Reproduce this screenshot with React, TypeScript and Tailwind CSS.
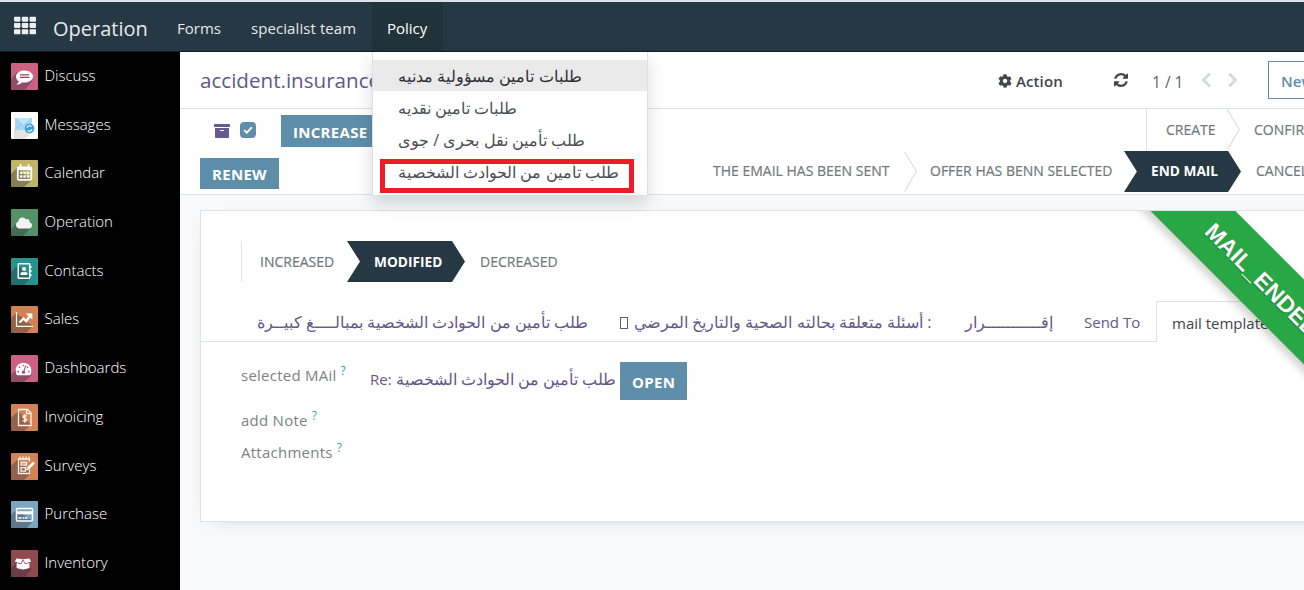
import type { ReactNode } from "react";
import { FaArchive, FaBoxOpen, FaCloud, FaCog, FaRegAddressBook, FaTachometerAlt, FaTh } from "react-icons/fa";

const RefreshIcon = () => (
  <svg viewBox="0 0 1536 1536" className="size-[14px] fill-[#40464c]">
    <path d="M1511 928q0 5-1 7-64 268-268 434.5t-478 166.5q-146 0-282.5-55t-243.5-157l-129 129q-19 19-45 19t-45-19-19-45v-448q0-26 19-45t45-19h448q26 0 45 19t19 45-19 45l-137 137q71 66 161 102t187 36q134 0 250-65t186-179q11-17 53-117 8-23 30-23h192q13 0 22.5 9.5t9.5 22.5zm25-800v448q0 26-19 45t-45 19h-448q-26 0-45-19t-19-45 19-45l138-138q-148-137-349-137-134 0-250 65t-186 179q-11 17-53 117-8 23-30 23h-199q-13 0-22.5-9.5t-9.5-22.5v-7q65-268 270-434.5t480-166.5q146 0 284 55.5t245 156.5l130-129q19-19 45-19t45 19 19 45z" />
  </svg>
);

const PagerArrow = ({ flip }: { flip?: boolean }) => (
  <svg viewBox="0 0 11 16" className={`h-[16px] w-[11px] fill-none stroke-[#d5d8de] stroke-[2.8] ${flip ? "-scale-x-100" : ""}`}>
    <path d="M9 1.500 2.500 8 9 14.500" />
  </svg>
);

type App = { name: string; tile: string; shadow?: string; icon: ReactNode };

const line = { fill: "none", stroke: "#f4f1ee", strokeWidth: 1.3 };

const apps: App[] = [
  {
    name: "Discuss",
    tile: "bg-[#cc6184]",
    shadow: "M6 9 0 16V27H14L22 17Z",
    icon: (
      <g>
        <path d="M13.5 7.500c-4.800 0-8.500 2.700-8.500 6 0 2 1 3.500 2.700 4.700 0 1.300-.9 2.200-2.400 3.200 2.400.2 4.400-.6 5.800-2 .8.100 1.600.2 2.400.2 4.800 0 8.500-2.700 8.500-6s-3.700-6.100-8.500-6.100Z" fill="#fff" />
        <path d="M9 11.800h9M9 14.400h9.500" stroke="#8c4b62" strokeWidth="1.2" />
      </g>
    ),
  },
  {
    name: "Messages",
    tile: "bg-[#fbfbfb]",
    icon: (
      <g>
        <path d="M3 17V27H14L22 19Z" fill="#e2e2e2" />
        <rect x="4" y="6" width="17" height="12" fill="#a5d8f3" />
        <path d="M4 6l8.500 7.500L21 6Z" fill="#bfe5f8" />
        <path d="M4 18l6-6.500M21 18l-6-6.500M4 6l8.500 7.500L21 6" stroke="#86c3e4" strokeWidth=".8" fill="none" />
        <circle cx="18.500" cy="16.500" r="4.800" fill="#3c9fd8" />
        <path d="M16 16a2.600 2.600 0 0 1 4.500-1.400M21 17a2.600 2.600 0 0 1-4.500 1.400" stroke="#e6f5fd" strokeWidth="1.2" fill="none" />
      </g>
    ),
  },
  {
    name: "Calendar",
    tile: "bg-[#c0b467]",
    shadow: "M6 8 0 14V27H13L21 20Z",
    icon: (
      <g>
        <rect x="6.8" y="7.3" width="13.500" height="12.500" rx="1" fill="none" stroke="#fff" strokeWidth="1.8" />
        <path d="M6 8.500h15" stroke="#fff" strokeWidth="3" />
        <path d="M9.500 4v4M17.500 4v4" stroke="#fff" strokeWidth="1.6" />
        <path d="M9 12.800h2.400m1 0h2.400m1 0h2.400M9 16.500h2.400m1 0h2.400m1 0h2.400" stroke="#fff" strokeWidth="2.3" />
      </g>
    ),
  },
  {
    name: "Operation",
    tile: "bg-[#549169]",
    shadow: "M6 14 0 20V27H12L21 18Z",
    icon: <FaCloud x="5" y="6" width="17" height="15" color="#f4f4f4" />,
  },
  {
    name: "Contacts",
    tile: "bg-[#259390]",
    shadow: "M7 7 0 14V27H13L20 20Z",
    icon: <FaRegAddressBook x="5.500" y="5" width="17" height="16.500" color="#fff" />,
  },
  {
    name: "Sales",
    tile: "bg-[#d38353]",
    shadow: "M5 7 0 12V27H15L22 20Z",
    icon: (
      <g>
        <path d="M5.500 6v14.300H22" fill="none" stroke="#fff" strokeWidth="1.2" />
        <path d="M8.500 16.500l4-4 2.700 2.700L19 10" fill="none" stroke="#fff" strokeWidth="2.2" />
        <path d="M14.800 7.500h6.500v6Z" fill="#fff" />
      </g>
    ),
  },
  {
    name: "Dashboards",
    tile: "bg-[#cc6184]",
    shadow: "M6 13 0 20V27H13L21 20Z",
    icon: <FaTachometerAlt x="4.500" y="6" width="18" height="16.500" color="#fff" />,
  },
  {
    name: "Invoicing",
    tile: "bg-[#d38353]",
    shadow: "M7 7 0 14V27H13L20 21Z",
    icon: (
      <g>
        <path d="M7.500 5.500h9l3.500 3.500v12.500H7.500Z" {...line} />
        <path d="M15.500 5.500v4H20" {...line} />
        <path d="M15.600 12.300c-.6-.7-3.600-1-3.700.6 0 1.900 3.800 1 3.800 2.900 0 1.700-3.300 1.500-4 .5M13.700 10.200v8.600" {...line} />
      </g>
    ),
  },
  {
    name: "Surveys",
    tile: "bg-[#d38353]",
    shadow: "M7 6 0 13V27H13L20 20Z",
    icon: (
      <g>
        <path d="M18.500 8.500V6H7.500v14.500h11v-4" {...line} />
        <path d="M9 3.500v3M12 3.500v3M15 3.500v3M18 3.500v3" {...line} />
        <path d="M10 9.500h5.500v2.600H10ZM10 14.700h4.500v3.500H10Z" {...line} />
        <path d="M23 9.500l-6 6" stroke="#fff" strokeWidth="2.6" />
        <path d="M15.200 17.300l.6-2.600 2 2Z" fill="#fff" />
      </g>
    ),
  },
  {
    name: "Purchase",
    tile: "bg-[#7ba6bf]",
    shadow: "M5 9 0 14V27H16L22 20Z",
    icon: (
      <g>
        <rect x="5.500" y="7.500" width="16" height="12.500" rx="1" fill="none" stroke="#fff" strokeWidth="1.500" />
        <path d="M5 11.800h17" stroke="#fff" strokeWidth="3" />
        <path d="M7.500 17h3m1 0h1.500m.6 0h3" stroke="#fff" strokeWidth="1.6" />
      </g>
    ),
  },
  {
    name: "Inventory",
    tile: "bg-[#8f4a4e]",
    shadow: "M6 12 0 18V27H14L21 19Z",
    icon: <FaBoxOpen x="4" y="6" width="19" height="16" color="#fff" />,
  },
];

const Sidebar = () => (
  <aside className="flex w-[180px] shrink-0 flex-col bg-black pt-[11px] pl-[11px]">
    {apps.map((a) => (
      <a key={a.name} className="flex h-[48.7px] shrink-0 items-start gap-[6.5px]">
        <span className={`block size-[27px] shrink-0 overflow-hidden rounded-[1px] ${a.tile}`}>
          <svg viewBox="0 0 27 27" className="block size-[27px]">
            {a.shadow && <path d={a.shadow} fill="#2d2d3a" opacity=".38" />}
            {a.icon}
          </svg>
        </span>
        <span className="text-[15px] leading-[25px] font-light whitespace-nowrap text-white">{a.name}</span>
      </a>
    ))}
  </aside>
);

const menuItems = [
  "طلبات تامين مسؤولية مدنيه",
  "طلبات تامين نقديه",
  "طلب تأمين نقل بحرى / جوى",
  "طلب تأمين من الحوادث الشخصية",
];

const PolicyMenu = () => (
  <div className="absolute top-[50px] left-0 z-20 h-[144px] w-[276px] border border-t-0 border-[#dcdfe4] bg-white pt-[8px] shadow-[0_8px_16px_rgba(0,0,0,0.15)]">
    {menuItems.map((m, i) => (
      <div
        key={m}
        className={`mb-[1px] h-[31px] pl-[25px] text-left text-[16.2px] leading-[33px] whitespace-nowrap ${i === 0 ? "bg-[#eaeaea] text-[#2c3036]" : "text-[#4a5057]"}`}
      >
        {m}
      </div>
    ))}
    <div className="absolute top-[107px] left-[7px] h-[34px] w-[254px] border-[5px] border-[#ee1c25]" />
  </div>
);

const Navbar = () => (
  <nav className="flex h-[52px] border-t-2 border-b border-t-[#dfe3e8] border-b-[#131e26] bg-[#263843] text-[15px] text-[#e6e9eb]">
    <div className="flex w-[53px] items-start pt-[14px] pl-[14px]">
      <FaTh className="h-[19px] w-[22px] text-[#eceeef]" preserveAspectRatio="none" viewBox="0 16 512 480" />
    </div>
    <div className="w-[109px] pt-[13px] text-[20px] leading-[28px]">Operation</div>
    <div className="flex">
      <a className="w-[74px] pt-[13px] pl-[15px] leading-[26px]">Forms</a>
      <a className="w-[136px] pt-[13px] pl-[15px] leading-[26px] tracking-[0.08px] whitespace-nowrap">specialist team</a>
      <div className="relative w-[71px] bg-[#22323b]">
        <a className="block pt-[13px] pl-[15px] leading-[26px] text-white">Policy</a>
        <PolicyMenu />
      </div>
    </div>
  </nav>
);

type StageProps = { children: string; width: string; active?: boolean; last?: boolean; gap?: string; textPad?: string };

const Stage = ({ children, width, active, last, gap = "pl-[19px]", textPad = "" }: StageProps) => (
  <div className={`relative flex h-[41px] shrink-0 items-center whitespace-nowrap ${width} ${gap} ${active ? "font-bold text-white" : "text-[#72787e]"}`}>
    {active && (
      <svg viewBox="0 0 118 41" preserveAspectRatio="none" className="absolute inset-0 h-full w-full fill-[#263843]">
        <path d="M0 0H105L118 20.500 105 41H0L13 20.500Z" />
      </svg>
    )}
    {!active && !last && (
      <svg viewBox="0 0 13 41" className="absolute top-0 right-0 h-[41px] w-[13px] fill-none stroke-[#dee2e6] stroke-[1.4]">
        <path d="M.5 .5 12.300 20.500 .5 40.500" />
      </svg>
    )}
    <span className={`${textPad} ${active ? "relative text-[13.7px]" : "text-[14px] [-webkit-text-stroke:0.2px]"}`}>{children}</span>
  </div>
);

const primary = "bg-[#5f8eaa] text-[15px] font-bold tracking-[0.3px] text-white";

const StatusBar = () => (
  <div className="flex h-[86px] shrink-0 justify-between border-b border-[#dee2e6] bg-white">
    <div className="flex flex-col pl-[20px]">
      <div className="flex h-[44px] items-start pl-[14px]">
        <FaArchive className="mt-[14px] size-[16px] text-[#675a91]" />
        <span className="mt-[13px] ml-[10px] flex size-[16px] items-center justify-center rounded-[4px] bg-[#5f8eaa]">
          <svg viewBox="0 0 10 10" className="size-[10px] fill-none stroke-white stroke-[1.8]">
            <path d="M1.200 5.200 3.800 7.700 8.800 2.400" />
          </svg>
        </span>
        <button className={`mt-[6px] ml-[25px] h-[32px] w-[99px] pl-[12px] text-left leading-[34px] ${primary}`}>INCREASE</button>
      </div>
      <button className={`mt-[5px] h-[31px] w-[79px] pl-[12px] text-left leading-[32px] ${primary}`}>RENEW</button>
    </div>
    <div className="flex w-[620px] shrink-0 flex-col items-start">
      <div className="ml-[462px] flex h-[42px] items-start border-l border-[#dee2e6]">
        <Stage width="w-[93px]">CREATE</Stage>
        <Stage width="w-[110px]" gap="pl-[14px]" last>CONFIRMED</Stage>
      </div>
      <div className="flex">
        <Stage width="w-[233px]" gap="pl-[29px]" textPad="pb-[2px]">THE EMAIL HAS BEEN SENT</Stage>
        <Stage width="w-[207px]" gap="pl-[13px]" textPad="pb-[2px]" last>OFFER HAS BENN SELECTED</Stage>
        <Stage width="w-[117px]" gap="pl-[27px]" active>END MAIL</Stage>
        <Stage width="w-[90px]" gap="pl-[15px]" textPad="pb-[2px]" last>CANCELED</Stage>
      </div>
    </div>
  </div>
);

const ControlPanel = () => (
  <div className="flex h-[57px] shrink-0 items-start border-b border-[#dee2e6] bg-white">
    <div className="w-[818px] shrink-0 pt-[12px] pl-[20px] text-[20.6px] leading-[32px] text-[#62578c]">accident.insurance</div>
    <div className="flex w-[116px] shrink-0 items-center gap-[4px] pt-[16px] text-[15px] leading-[26px] font-semibold tracking-[0.1px] text-[#40464c]">
      <FaCog className="size-[14px]" />
      <span>Action</span>
    </div>
    <div className="w-[38px] shrink-0 pt-[21px]"><RefreshIcon /></div>
    <div className="w-[49px] shrink-0 pt-[17px] text-[15.5px] leading-[26px] whitespace-nowrap text-[#5c6268]">1 / 1</div>
    <div className="flex w-[67px] shrink-0 gap-[15px] pt-[20px]">
      <PagerArrow />
      <PagerArrow flip />
    </div>
    <button className="mt-[9px] h-[38px] w-[70px] shrink-0 border border-[#5f8eaa] pl-[12px] text-left text-[15px] leading-[38px] font-semibold text-[#5f8eaa]">New</button>
  </div>
);

const Field = ({ label, height, children }: { label: string; height: string; children?: ReactNode }) => (
  <div className={`flex ${height}`}>
    <div className="flex w-[129px] shrink-0 text-[15px] leading-[26px] tracking-[0.25px] whitespace-nowrap text-[#7d8185]">
      {label}
      <span className="-mt-[4px] ml-[4px] text-[12px] text-[#2f9fc0]">?</span>
    </div>
    {children}
  </div>
);

const Sheet = () => (
  <div className="relative mt-[15px] ml-[20px] h-[312px] w-[1180px] shrink-0 overflow-visible border border-[#dee2e6] bg-white shadow-[0_5px_20px_-15px_rgba(0,0,0,0.4)]">
    <div className="mt-[30px] ml-[40px] flex h-[41px] border-l border-[#dee2e6]">
      <Stage width="w-[105px]" gap="pl-[18px]" last>INCREASED</Stage>
      <Stage width="w-[118px]" gap="pl-[27px]" textPad="pt-[2px]" active>MODIFIED</Stage>
      <Stage width="w-[110px]" gap="pl-[15px]" last>DECREASED</Stage>
    </div>
    <div className="mt-[19px] flex h-[41px] pl-[40px] text-[15px] leading-[42px] whitespace-nowrap text-[#62578c] shadow-[inset_0_-1px_0_#dee2e6]">
      <a className="w-[363px] shrink-0 pl-[16px] text-[16px]">طلب تأمين من الحوادث الشخصية بمبالــــغ كبيــرة</a>
      <a className="flex w-[345px] shrink-0 items-start pl-[16px] text-[16px]">
        <span className="mt-[16px] mr-[6px] block h-[12px] w-[8px] border border-[#62578c]" />
        <span className="text-[16.15px]">أسئلة متعلقة بحالته الصحية والتاريخ المرضي&lrm; :</span>
      </a>
      <a className="w-[119px] shrink-0 pl-[16px] text-[16.2px]">إقـــــــــــرار</a>
      <a className="w-[88px] shrink-0 pl-[16px]">Send To</a>
      <a className="h-[41px] w-[140px] shrink-0 border border-b-0 border-[#dee2e6] bg-white pl-[15px] text-[#40464c]">mail template</a>
    </div>
    <div className="pt-[20px] pl-[40px]">
      <Field label="selected MAil" height="h-[45px]">
        <div className="w-[250px] shrink-0 pt-[4px] text-[15.5px] leading-[26px] whitespace-nowrap text-[#62578c]">
          <span className="text-[15px]">Re: </span>
          <span className="text-[16.2px]">طلب تأمين من الحوادث الشخصية</span>
        </div>
        <button className={`h-[38px] w-[67px] pl-[12px] text-left leading-[40px] ${primary}`}>OPEN</button>
      </Field>
      <Field label="add Note" height="h-[32px]" />
      <Field label="Attachments" height="h-[32px]" />
    </div>
    <div className="absolute top-0 left-[936px] h-[190px] w-[190px] overflow-hidden">
      <div className="absolute top-[59px] left-[-25px] h-[60px] w-[340px] rotate-45 bg-[#28a745] pl-[67px] font-['Liberation_Sans',sans-serif] text-[23px] leading-[60px] font-bold text-white shadow-[0_5px_10px_rgba(0,0,0,0.2)] [text-shadow:0_1px_1px_rgba(0,0,0,0.3)]">
        MAIL_ENDED
      </div>
    </div>
  </div>
);

export default function App() {
  return (
    <div className="flex h-[590px] w-[1304px] flex-col overflow-hidden font-['Open_Sans',sans-serif]">
      <div className="relative z-10 shrink-0"><Navbar /></div>
      <div className="flex min-h-0 flex-1">
        <Sidebar />
        <main className="flex min-w-0 flex-1 flex-col overflow-hidden bg-[#f8f9fb]">
          <ControlPanel />
          <StatusBar />
          <Sheet />
        </main>
      </div>
    </div>
  );
}
